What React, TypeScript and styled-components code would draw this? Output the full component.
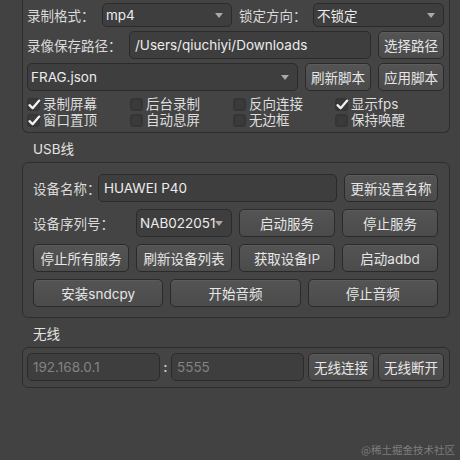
import React from "react";
import styled, { createGlobalStyle } from "styled-components";

const Global = createGlobalStyle`
  html, body { margin: 0; padding: 0; background: #424242; }
  body { width: 460px; height: 460px; overflow: hidden; }
  * { box-sizing: border-box; }
`;

const Page = styled.div`
  position: relative;
  width: 460px;
  height: 460px;
  padding: 0 10px 0 22px;
  font-family: Inter, "Noto Sans CJK SC", sans-serif;
  font-size: 13.5px;
  color: #dcdcdc;
`;

const GroupBox = styled.div<{ $open?: boolean }>`
  border: 1px solid #2d2d2d;
  border-top: ${(p) => (p.$open ? "none" : "1px solid #2d2d2d")};
  border-radius: ${(p) => (p.$open ? "0 0 6px 6px" : "6px")};
  background: #444444;
`;

const TopGroup = styled(GroupBox)`
  padding: 3px 5px 4px 4px;
`;

const UsbGroup = styled(GroupBox)`
  padding: 11px 11px 10px 10px;
  display: flex;
  flex-direction: column;
  gap: 7px;
`;

const WirelessGroup = styled(GroupBox)`
  padding: 5px 5px 6px 4px;
`;

const SectionTitle = styled.div`
  margin: 8px 0 5px 11px;
  line-height: 16px;
  color: #e2e2e2;
`;

const Label = styled.span<{ $w?: number }>`
  width: ${(p) => (p.$w ? `${p.$w}px` : "auto")};
  flex: none;
  white-space: nowrap;
  color: #dadada;
`;

const HalfRow = styled.div`
  display: grid;
  grid-template-columns: 205px 1fr;
  column-gap: 7px;
  height: 24px;
  margin-bottom: 4px;
`;

const Field = styled.div<{ $labelW: number }>`
  display: grid;
  grid-template-columns: ${(p) => p.$labelW}px 1fr;
  align-items: center;
`;

const FlexRow = styled.div<{ $gap: number; $mb?: number }>`
  display: flex;
  align-items: center;
  gap: ${(p) => p.$gap}px;
  height: 28px;
  margin-bottom: ${(p) => p.$mb ?? 0}px;
`;

const GridRow = styled.div<{ $cols: number }>`
  display: grid;
  grid-template-columns: repeat(${(p) => p.$cols}, 1fr);
  column-gap: 7px;
  height: 28px;
  align-items: center;
`;

const Input = styled.div<{ $placeholder?: boolean; $w?: number }>`
  height: 100%;
  ${(p) => (p.$w ? `width: ${p.$w}px; flex: none;` : "flex: 1; min-width: 0;")}
  display: flex;
  align-items: center;
  padding-left: 5px;
  background: #3e3e3e;
  border: 1px solid #2b2b2b;
  border-radius: 5px;
  color: ${(p) => (p.$placeholder ? "#838383" : "#ececec")};
  white-space: nowrap;
  overflow: hidden;
`;

const ComboBox = styled.div<{ $grow?: boolean }>`
  position: relative;
  height: 100%;
  ${(p) => (p.$grow ? "flex: 1; min-width: 0;" : "")}
  display: flex;
  align-items: center;
  padding-left: 3px;
  background: #3e3e3e;
  border: 1px solid #2b2b2b;
  border-radius: 5px;
  color: #ececec;
  white-space: nowrap;
`;

const Arrow = styled.span`
  position: absolute;
  right: 8px;
  top: 50%;
  margin-top: -2px;
  width: 0;
  height: 0;
  border-left: 4px solid transparent;
  border-right: 4px solid transparent;
  border-top: 5px solid #a9a9a9;
`;

const Button = styled.button<{ $w?: number; $ml?: number }>`
  height: 100%;
  ${(p) => (p.$w ? `width: ${p.$w}px; flex: none;` : "")}
  margin-left: ${(p) => p.$ml ?? 0}px;
  padding: 0;
  font: inherit;
  color: #e6e6e6;
  background: linear-gradient(#545454, #4b4b4b);
  border: 1px solid #2a2a2a;
  border-radius: 5px;
  box-shadow: inset 0 1px 0 rgba(255, 255, 255, 0.05);
  white-space: nowrap;
  cursor: default;
`;

const Checks = styled.div`
  display: grid;
  grid-template-columns: 103px 103px 102px 1fr;
  grid-auto-rows: 16px;
  margin-top: 5px;
`;

const CheckItem = styled.label`
  display: flex;
  align-items: center;
  gap: 3px;
  line-height: 16px;
  white-space: nowrap;
  color: #dedede;
`;

const Box = styled.span`
  position: relative;
  width: 13px;
  height: 13px;
  flex: none;
  background: #3a3a3a;
  border: 1px solid #353535;
  border-radius: 3px;
  box-shadow: inset 0 0 0 1px rgba(0,0,0,0.08);
`;

const CheckSvg = styled.svg`
  position: absolute;
  left: -1px;
  top: -2px;
`;

const Colon = styled.span`
  width: 3px;
  flex: none;
  color: #d0d0d0;
  font-weight: 600;
  display: flex;
  justify-content: center;
`;

const Watermark = styled.div`
  position: absolute;
  right: 5px;
  bottom: 3px;
  font-size: 10.5px;
  color: rgba(255, 255, 255, 0.33);
  font-family: "Noto Sans CJK SC", sans-serif;
`;

function Check({ label, checked }: { label: string; checked?: boolean }) {
  return (
    <CheckItem>
      <Box>
        {checked && (
          <CheckSvg width="15" height="15" viewBox="0 0 15 15">
            <path d="M2.5 8.2 L5.6 11.2 L12.2 3.6" fill="none" stroke="#f2f2f2" strokeWidth="2.3" strokeLinecap="round" strokeLinejoin="round" />
          </CheckSvg>
        )}
      </Box>
      {label}
    </CheckItem>
  );
}

function Combo({ text, grow }: { text: string; grow?: boolean }) {
  return (
    <ComboBox $grow={grow}>
      {text}
      <Arrow />
    </ComboBox>
  );
}

export default function App() {
  return (
    <Page>
      <Global />
      <TopGroup $open>
        <HalfRow>
          <Field $labelW={75}>
            <Label>录制格式：</Label>
            <Combo text="mp4" />
          </Field>
          <Field $labelW={74}>
            <Label>锁定方向：</Label>
            <Combo text="不锁定" />
          </Field>
        </HalfRow>
        <FlexRow $gap={0} $mb={4}>
          <Label $w={102}>录像保存路径：</Label>
          <Input>/Users/qiuchiyi/Downloads</Input>
          <Button $w={66} $ml={7}>选择路径</Button>
        </FlexRow>
        <FlexRow $gap={7}>
          <Combo text="FRAG.json" grow />
          <Button $w={66}>刷新脚本</Button>
          <Button $w={66}>应用脚本</Button>
        </FlexRow>
        <Checks>
          <Check label="录制屏幕" checked />
          <Check label="后台录制" />
          <Check label="反向连接" />
          <Check label="显示fps" checked />
          <Check label="窗口置顶" checked />
          <Check label="自动息屏" />
          <Check label="无边框" />
          <Check label="保持唤醒" />
        </Checks>
      </TopGroup>

      <SectionTitle>USB线</SectionTitle>
      <UsbGroup>
        <FlexRow $gap={0}>
          <Label $w={65}>设备名称：</Label>
          <Input>HUAWEI P40</Input>
          <Button $w={94} $ml={7}>更新设置名称</Button>
        </FlexRow>
        <GridRow $cols={4}>
          <Label>设备序列号：</Label>
          <Combo text="NAB022051" />
          <Button>启动服务</Button>
          <Button>停止服务</Button>
        </GridRow>
        <GridRow $cols={4}>
          <Button>停止所有服务</Button>
          <Button>刷新设备列表</Button>
          <Button>获取设备IP</Button>
          <Button>启动adbd</Button>
        </GridRow>
        <GridRow $cols={3}>
          <Button>安装sndcpy</Button>
          <Button>开始音频</Button>
          <Button>停止音频</Button>
        </GridRow>
      </UsbGroup>

      <SectionTitle>无线</SectionTitle>
      <WirelessGroup>
        <FlexRow $gap={4}>
          <Input $placeholder $w={133}>192.168.0.1</Input>
          <Colon>:</Colon>
          <Input $placeholder $w={133}>5555</Input>
          <Button $w={66}>无线连接</Button>
          <Button $w={66}>无线断开</Button>
        </FlexRow>
      </WirelessGroup>
      <Watermark>@稀土掘金技术社区</Watermark>
    </Page>
  );
}
